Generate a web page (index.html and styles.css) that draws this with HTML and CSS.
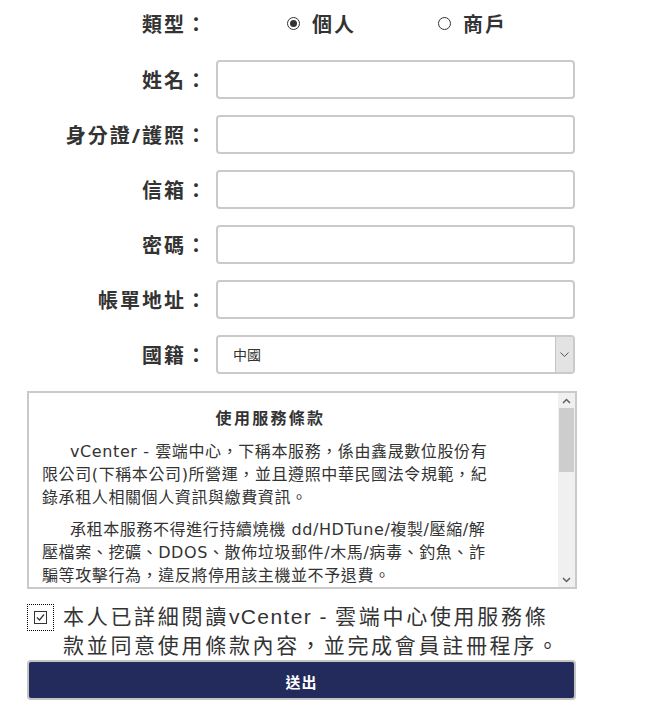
FILE: index.html
```html
<!DOCTYPE html>
<html lang="zh-Hant">
<head>
    <meta charset="UTF-8">
    <meta name="viewport" content="width=device-width, initial-scale=1.0">
    <title>會員註冊</title>
    <link rel="stylesheet" href="styles.css">
</head>
<body>
    <form class="register">
        <div class="row">
            <label class="label">類型：</label>
            <div class="options">
                <label class="option"><span class="radio checked"></span>個人</label>
                <label class="option"><span class="radio"></span>商戶</label>
            </div>
        </div>
        <div class="row">
            <label class="label" for="name">姓名：</label>
            <input class="field" type="text" id="name">
        </div>
        <div class="row">
            <label class="label" for="idno">身分證/護照：</label>
            <input class="field" type="text" id="idno">
        </div>
        <div class="row">
            <label class="label" for="email">信箱：</label>
            <input class="field" type="text" id="email">
        </div>
        <div class="row">
            <label class="label" for="pwd">密碼：</label>
            <input class="field" type="password" id="pwd">
        </div>
        <div class="row">
            <label class="label" for="addr">帳單地址：</label>
            <input class="field" type="text" id="addr">
        </div>
        <div class="row">
            <label class="label" for="country">國籍：</label>
            <div class="select-wrap">
                <select class="field select" id="country">
                    <option>中國</option>
                    <option>台灣</option>
                    <option>香港</option>
                </select>
                <span class="select-arrow">
                    <svg width="9" height="5" viewBox="0 0 9 5"><path d="M0.5 0.5 L4.5 4.5 L8.5 0.5" fill="none" stroke="#555" stroke-width="1"/></svg>
                </span>
            </div>
        </div>

        <div class="terms">
            <div class="terms-body">
                <h3>使用服務條款</h3>
                <p>vCenter - 雲端中心，下稱本服務，係由鑫晟數位股份有限公司(下稱本公司)所營運，並且遵照中華民國法令規範，紀錄承租人相關個人資訊與繳費資訊。</p>
                <p>承租本服務不得進行持續燒機 dd/HDTune/複製/壓縮/解壓檔案、挖礦、DDOS、散佈垃圾郵件/木馬/病毒、釣魚、詐騙等攻擊行為，違反將停用該主機並不予退費。</p>
                <p>承租人應妥善保管帳號與密碼，因帳號密碼外洩所造成之損失，由承租人自行負責。</p>
                <p>本公司保留隨時修改本服務條款之權利，修改後之條款將公佈於本網站，不另行個別通知。</p>
                <p>如有任何疑問，請與本公司客服人員聯繫。</p>
            </div>
            <div class="scrollbar">
                <span class="sb-btn">
                    <svg width="9" height="6" viewBox="0 0 9 6"><path d="M1 5 L4.5 1.5 L8 5" fill="none" stroke="#606060" stroke-width="1.5"/></svg>
                </span>
                <span class="sb-track"><span class="sb-thumb"></span></span>
                <span class="sb-btn">
                    <svg width="9" height="6" viewBox="0 0 9 6"><path d="M1 1 L4.5 4.5 L8 1" fill="none" stroke="#606060" stroke-width="1.5"/></svg>
                </span>
            </div>
        </div>

        <label class="agree">
            <span class="check-focus">
                <span class="check">
                    <svg width="11" height="11" viewBox="0 0 11 11"><path d="M2 5.5 L4.5 8 L9 2.5" fill="none" stroke="#333" stroke-width="1.2"/></svg>
                </span>
            </span>
            <span class="agree-text">本人已詳細閱讀<span class="brand">vCenter - </span>雲端中心使用服務條款並同意使用條款內容，並完成會員註冊程序。</span>
        </label>

        <button class="submit" type="button">送出</button>
    </form>
</body>
</html>
```

FILE: styles.css
```css
body {
    margin: 0;
    padding: 0;
    background: #fff;
    color: #333;
    font-family: "Noto Sans", "Noto Sans CJK TC", sans-serif;
}
.register {
    width: 550px;
    margin-left: 27px;
    padding-top: 3px;
}
.row {
    display: flex;
    align-items: center;
    height: 39px;
    margin-bottom: 16px;
}
.row:first-child {
    height: 40px;
    margin-bottom: 17px;
}
.label {
    flex: none;
    width: 181px;
    margin-right: 8px;
    text-align: right;
    font-size: 20px;
    font-weight: bold;
    letter-spacing: 2px;
    color: #333;
}
.field {
    box-sizing: border-box;
    width: 359px;
    height: 39px;
    border: 2px solid #cacaca;
    border-radius: 4px;
    background: #fff;
    font-family: inherit;
    outline: none;
}
.options {
    display: flex;
    padding-left: 71px;
}
.option {
    display: flex;
    align-items: center;
    width: 151px;
    font-size: 20px;
    font-weight: bold;
    letter-spacing: 2px;
    color: #333;
}
.radio {
    box-sizing: border-box;
    width: 13px;
    height: 13px;
    margin-right: 12px;
    border: 1px solid #333;
    border-radius: 50%;
    background: #fff;
    position: relative;
}
.radio.checked::after {
    content: "";
    position: absolute;
    left: 2px;
    top: 2px;
    width: 7px;
    height: 7px;
    border-radius: 50%;
    background: #333;
}
.select-wrap {
    position: relative;
    width: 359px;
    height: 39px;
}
.select {
    appearance: none;
    -webkit-appearance: none;
    padding-left: 15px;
    font-size: 14px;
    color: #333;
}
.select-arrow {
    position: absolute;
    right: 2px;
    top: 2px;
    bottom: 2px;
    width: 17px;
    display: flex;
    align-items: center;
    justify-content: center;
    background: #e3e3e3;
    border-left: 1px solid #c4c4c4;
    pointer-events: none;
}
.terms {
    box-sizing: border-box;
    display: flex;
    height: 198px;
    margin-top: 17px;
    border: 2px solid #cacaca;
    color: #333;
}
.terms-body {
    flex: 1;
    overflow-y: auto;
    padding: 12px 59px 20px 13px;
    font-family: "DejaVu Sans", "Noto Sans CJK TC", sans-serif;
}
.terms h3 {
    margin: 0 0 11px 0;
    text-align: center;
    font-family: "Noto Sans CJK TC", sans-serif;
    font-size: 16px;
    line-height: 24px;
    letter-spacing: 2.3px;
}
.terms p {
    margin: 0 0 9px 0;
    font-size: 16px;
    line-height: 23px;
    letter-spacing: 0.6px;
    text-indent: 28px;
}
.scrollbar {
    flex: none;
    width: 17px;
    display: flex;
    flex-direction: column;
    background: #f0f0f0;
}
.sb-btn {
    height: 15px;
    display: flex;
    align-items: center;
    justify-content: center;
}
.sb-track {
    flex: 1;
}
.sb-thumb {
    display: block;
    height: 64px;
    margin: 0 1px;
    background: #cdcdcd;
}
.agree {
    display: flex;
    align-items: flex-start;
    margin-top: 13px;
    padding-right: 9px;
}
.check-focus {
    box-sizing: border-box;
    flex: none;
    width: 27px;
    height: 27px;
    margin-top: 2px;
    margin-right: 9px;
    border: 1px dotted #000;
    display: flex;
    align-items: center;
    justify-content: center;
}
.check {
    box-sizing: border-box;
    width: 13px;
    height: 13px;
    border: 1px solid #333;
    background: #fff;
    display: flex;
    align-items: center;
    justify-content: center;
}
.agree-text {
    font-family: "Liberation Sans", "Noto Sans CJK TC", sans-serif;
    font-size: 21px;
    line-height: 29px;
    letter-spacing: 2.7px;
    color: #333;
}
.agree-text .brand {
    letter-spacing: 1.4px;
}
.submit {
    display: block;
    box-sizing: border-box;
    width: 549px;
    height: 40px;
    padding-top: 3px;
    border: 2px solid #c4c4c4;
    border-radius: 4px;
    background: #232a5c;
    color: #fff;
    font-family: inherit;
    font-size: 15px;
    font-weight: bold;
    letter-spacing: 1px;
}
```
